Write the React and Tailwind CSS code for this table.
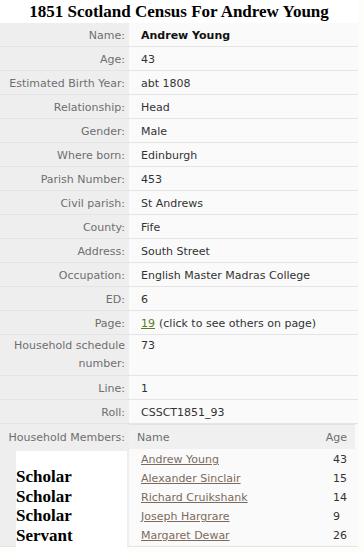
const rows = [
  { label: "Name:", value: "Andrew Young", bold: true },
  { label: "Age:", value: "43" },
  { label: "Estimated Birth Year:", value: "abt 1808" },
  { label: "Relationship:", value: "Head" },
  { label: "Gender:", value: "Male" },
  { label: "Where born:", value: "Edinburgh" },
  { label: "Parish Number:", value: "453" },
  { label: "Civil parish:", value: "St Andrews" },
  { label: "County:", value: "Fife" },
  { label: "Address:", value: "South Street" },
  { label: "Occupation:", value: "English Master Madras College" },
  { label: "ED:", value: "6" },
];

const members = [
  { name: "Andrew Young", age: "43" },
  { name: "Alexander Sinclair", age: "15" },
  { name: "Richard Cruikshank", age: "14" },
  { name: "Joseph Hargrare", age: "9" },
  { name: "Margaret Dewar", age: "26" },
];

const Row = ({ label, children, tall }) => (
  <div className={`flex border-b border-[#e4e4e4] ${tall ? "" : "h-[24px]"}`}>
    <div className={`w-[129px] shrink-0 bg-[#eeeeee] text-right pr-[4px] text-[#6e6e6e] ${tall ? "py-[2px] pl-[12px] leading-[18px]" : "flex items-center justify-end pt-[3px]"}`}>
      {label}
    </div>
    <div className={`flex-1 bg-[#fafafa] pl-[12px] text-[#333] ${tall ? "py-[2px] leading-[18px]" : "flex items-center pt-[3px]"}`}>
      {children}
    </div>
  </div>
);

export default function App() {
  return (
    <div className="w-[364px] h-[552px] overflow-hidden bg-[#fdfdf9] relative" style={{ fontFamily: '"DejaVu Sans", Verdana, sans-serif' }}>
      <div className="w-[358px] text-[11px]">
        <h1 className="h-[23px] flex items-center justify-center text-[17px] font-bold text-black bg-white" style={{ fontFamily: '"Liberation Serif", "Times New Roman", serif' }}>
          1851 Scotland Census For Andrew Young
        </h1>

        {rows.map((r) => (
          <Row key={r.label} label={r.label}>
            <span className={r.bold ? "font-bold text-[#111]" : ""}>{r.value}</span>
          </Row>
        ))}

        <Row label="Page:">
          <a className="underline text-[#5f7a22]">19</a>
          <span className="ml-[4px]">(click to see others on page)</span>
        </Row>

        <Row label="Household schedule number:" tall>
          73
        </Row>

        <Row label="Line:">1</Row>
        <Row label="Roll:">CSSCT1851_93</Row>

        <div className="flex border-b border-[#e4e4e4]">
          <div className="w-[129px] shrink-0 bg-[#eeeeee] text-right pr-[4px] text-[#6e6e6e] pt-[6px]">
            Household Members:
          </div>
          <div className="flex-1 bg-[#fafafa]">
            <div className="flex h-[25px] items-center pt-[2px] bg-[#f0f0f0] border-t border-[#e2e2e2] text-[#6e6e6e] mr-[3px]">
              <span className="pl-[8px] flex-1">Name</span>
              <span className="pr-[8px]">Age</span>
            </div>
            <div className="pt-[2px]">
              {members.map((m) => (
                <div key={m.name} className="flex h-[19px] items-center">
                  <a className="pl-[12px] flex-1 underline text-[#7c6a5c]">{m.name}</a>
                  <span className="w-[25px] text-[#333]">{m.age}</span>
                </div>
              ))}
            </div>
          </div>
        </div>
      </div>

      <div className="absolute left-[16px] top-[451px] w-[111px] h-[101px] bg-white pt-[16px] text-[17px] font-bold leading-[19.5px] text-black" style={{ fontFamily: '"Liberation Serif", "Times New Roman", serif' }}>
        <div>Scholar</div>
        <div>Scholar</div>
        <div>Scholar</div>
        <div>Servant</div>
      </div>
    </div>
  );
}
